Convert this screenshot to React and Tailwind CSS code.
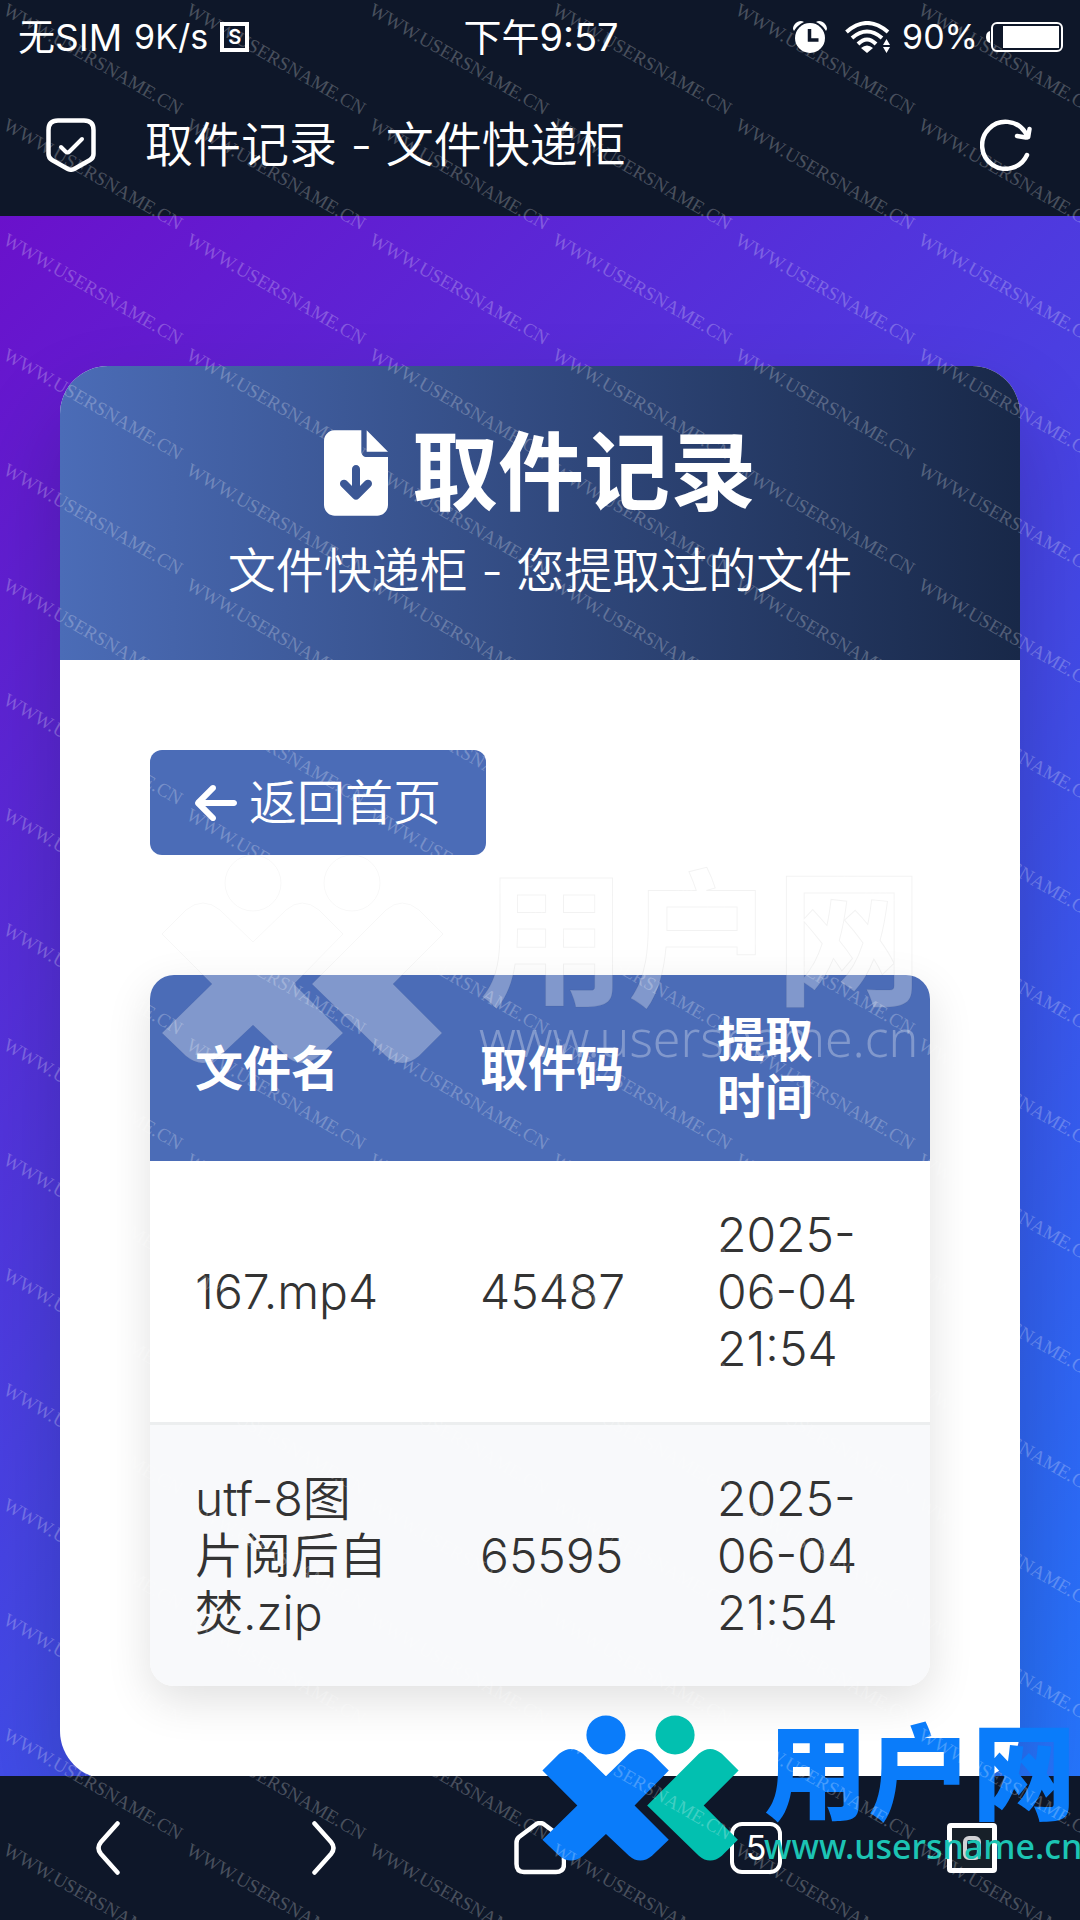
import React from "react";
import { FaArrowLeft, FaFileArrowDown } from "react-icons/fa6";

const records = [
  { name: "167.mp4", code: "45487", time: "2025-\n06-04\n21:54" },
  { name: "utf-8图片阅后自焚.zip", code: "65595", time: "2025-\n06-04\n21:54" },
];

const stamps = Array.from({ length: 17 * 6 }, (_, i) => i);

const StatusBar = () => (
  <div className="grid h-[74px] grid-cols-[1fr_auto_1fr] items-center pl-[18px] pr-4 text-[34px] leading-none">
    <div className="flex items-center gap-3">
      <span className="text-[37px]">无SIM</span>
      <span>9K/s</span>
      <span className="flex h-[30px] w-[29px] items-center justify-center border-4 border-white text-[20px] font-semibold">
        S
      </span>
    </div>
    <span className="text-[38px]">下午9:57</span>
    <div className="flex items-center justify-end gap-3">
      {/* Alarm */}
      <svg className="mr-1.5 h-8 w-[34px]" viewBox="0 0 34 32" fill="white">
        <path d="M0 8C0 3 6 -2 11 1C7 3 4 5 1 10Z" />
        <path d="M34 8C34 3 28 -2 23 1C27 3 30 5 33 10Z" />
        <circle cx="17" cy="17" r="15" />
        <path d="M16.500 8v11h9" fill="none" stroke="#0e1729" strokeWidth="3.500" />
      </svg>
      {/* Wifi */}
      <svg className="h-8 w-[45px]" viewBox="0 0 45 32" fill="none" stroke="white" strokeWidth="4">
        <path d="M1.500 11Q22 -7 43 11" />
        <path d="M7 17Q22 4 37 17" />
        <path d="M13 23Q22 14 31 23" />
        <path d="M16 27Q22 22 28 27L22 32Z" fill="white" stroke="none" />
        <path d="M38 24l3.500-6l3.500 6zM38 26h7l-3.500 6z" fill="white" stroke="none" />
      </svg>
      <span>90%</span>
      {/* Battery */}
      <svg className="-ml-1 h-[30px] w-[78px]" viewBox="0 0 78 30" fill="none">
        <path d="M4 9Q0 10 0 15T4 21Z" fill="white" />
        <rect x="6" y="1" width="70" height="28" rx="5" stroke="white" strokeWidth="2" />
        <rect x="17" y="4" width="56" height="22" fill="white" />
      </svg>
    </div>
  </div>
);

const TitleBar = () => (
  <div className="flex h-[142px] items-center pl-[46px] pr-12">
    <svg className="h-[54px] w-[50px]" viewBox="0 0 50 54" fill="none" stroke="white" strokeLinecap="round" strokeLinejoin="round">
      <path d="M12 2.500H38Q47.500 2.500 47.500 12V36Q47.500 40 44 42L29 50.500Q25 53 21 50.500L6 42Q2.500 40 2.500 36V12Q2.500 2.500 12 2.500Z" strokeWidth="4.500" />
      <path d="M15 29L19.500 33.500Q21.500 35.500 23.500 33.500L36 21" strokeWidth="4" />
    </svg>
    <h2 className="ml-[49px] flex-1 text-[48px] font-[350] leading-none">取件记录 - 文件快递柜</h2>
    <button type="button" aria-label="刷新">
      <svg className="h-[52px] w-[52px]" viewBox="0 0 52 52" fill="none" stroke="white" strokeWidth="4.500" strokeLinecap="round" strokeLinejoin="round">
        <path d="M47 36A23.500 23.500 0 1 1 45 13L48 18" />
        <path d="M37 17L46 18.500Q48 18.500 48.500 16L49.500 10" />
      </svg>
    </button>
  </div>
);

const RecordTable = () => (
  <div className="mt-[120px] overflow-hidden rounded-3xl shadow-[0_15px_45px_rgba(0,0,0,0.12)]">
    <table className="w-full table-fixed text-left text-[48px] leading-[57px] text-[#333]">
      <thead className="bg-[#4b6cb7] text-white">
        <tr>
          <th className="w-[285px] px-[45px] py-9 font-bold">文件名</th>
          <th className="w-[237px] px-[45px] py-9 font-bold whitespace-nowrap">取件码</th>
          <th className="whitespace-pre-line px-[45px] py-9 font-bold">{"提取\n时间"}</th>
        </tr>
      </thead>
      <tbody>
        {records.map((row) => (
          <tr
            key={row.code}
            className="border-b-[3px] border-[#eceeef] bg-white font-[350] last:border-b-0 even:bg-[#f8f9fb]"
          >
            <td className="px-[45px] py-[45px] break-words">{row.name}</td>
            <td className="px-[45px] py-[45px]">{row.code}</td>
            <td className="whitespace-pre-line px-[45px] py-[45px]">{row.time}</td>
          </tr>
        ))}
      </tbody>
    </table>
  </div>
);

const NavBar = () => (
  <nav className="grid h-36 shrink-0 grid-cols-5 items-center justify-items-center bg-[#0e1729]">
    <button type="button" aria-label="后退">
      <svg className="h-[54px] w-6" viewBox="0 0 24 54" fill="none" stroke="white" strokeWidth="4.500" strokeLinecap="round">
        <path d="M21.500 2.500L5 21Q0 27 5 33L21.500 51.500" />
      </svg>
    </button>
    <button type="button" aria-label="前进">
      <svg className="h-[54px] w-6" viewBox="0 0 24 54" fill="none" stroke="white" strokeWidth="4.500" strokeLinecap="round">
        <path d="M2.500 2.500L19 21Q24 27 19 33L2.500 51.500" />
      </svg>
    </button>
    <button type="button" aria-label="主页">
      <svg className="h-[54px] w-[52px]" viewBox="0 0 52 54" fill="none" stroke="white" strokeWidth="4.500">
        <path d="M5 16L21 4Q26 0 31 4L47 16Q50 18.500 50 22V43Q50 51 42 51H10Q2.500 51 2.500 43V22Q2.500 18 5 16Z" />
      </svg>
    </button>
    <button
      type="button"
      aria-label="标签页"
      className="flex h-[52px] w-[52px] items-center justify-center rounded-xl border-4 border-white text-[34px] leading-none"
    >
      5
    </button>
    <button
      type="button"
      aria-label="菜单"
      className="flex h-[50px] w-[50px] items-center justify-center rounded-sm border-[5px] border-white bg-[#172029]"
    >
      <span className="h-6 w-[18px] rounded-md border-4 border-white/80" />
    </button>
  </nav>
);

const BrandMark = ({ className, left, right, outline }) => (
  <svg className={className} viewBox="0 0 285 212" stroke={outline} strokeWidth="1">
    <g fill={left}>
      <circle cx="93" cy="30" r="28" />
      <path d="M2 81L26 57Q43 43 60 57L93 89L126 57Q142 43 159 57L183 81L134 131L183 180L159 203Q142 217 126 203L93 172L60 203Q43 217 26 203L2 180L52 131Z" />
    </g>
    <g fill={right}>
      <circle cx="192" cy="30" r="28" />
      <path d="M152 131L226 57Q242 43 259 57L283 81L233 131L282 180L259 203Q242 217 226 203Z" />
    </g>
  </svg>
);

// Repeated diagonal site name over the whole screen
const Stamps = () => (
  <div className="pointer-events-none absolute inset-0 grid auto-rows-[115px] grid-cols-[repeat(6,183px)] overflow-hidden pl-2.5 font-['Liberation_Serif',serif] text-[19px] leading-[19px] text-white/25">
    {stamps.map((i) => (
      <span key={i} className="h-[19px] origin-top-left rotate-30 whitespace-nowrap">
        WWW.USERSNAME.CN
      </span>
    ))}
  </div>
);

const App = () => {
  return (
    <div className="relative flex h-screen flex-col overflow-hidden bg-[#0e1729] font-[Inter,'Noto_Sans_CJK_SC',sans-serif] text-white">
      <header className="shrink-0">
        <StatusBar />
        <TitleBar />
      </header>

      <main className="min-h-0 flex-1 overflow-hidden bg-[linear-gradient(135deg,#6a11cb_0%,#2575fc_100%)] px-[60px] pt-[150px]">
        <section className="overflow-hidden rounded-[48px] bg-white shadow-[0_45px_90px_rgba(0,0,0,0.2)]">
          <div className="bg-[linear-gradient(to_right,#4b6cb7,#182848)] py-[60px] text-center">
            <h1 className="flex items-center justify-center gap-6 text-[86px] font-bold leading-[94px]">
              <FaFileArrowDown className="h-[86px] w-16" />
              取件记录
            </h1>
            <p className="mt-[22px] text-[48px] font-[350] leading-[58px]">文件快递柜 - 您提取过的文件</p>
          </div>
          <div className="px-[90px] pb-[93px] pt-[90px]">
            <a
              href="#home"
              className="flex h-[105px] w-fit items-center gap-3 rounded-xl bg-[#4b6cb7] px-[45px] text-[48px] font-[350]"
            >
              <FaArrowLeft className="h-12 w-[42px]" />
              返回首页
            </a>
            <RecordTable />
          </div>
        </section>
      </main>

      <NavBar />

      {/* Faded brand across the table head */}
      <div className="pointer-events-none absolute left-40 top-[853px] flex gap-[34px] text-white/30">
        <BrandMark className="h-[212px] w-[285px]" left="rgba(255,255,255,0.3)" right="rgba(255,255,255,0.3)" outline="rgba(0,0,0,0.03)" />
        <div className="pt-4">
          <p className="text-[148px] font-bold leading-[144px] [-webkit-text-stroke:1px_rgba(0,0,0,0.05)]">用户网</p>
          <p className="font-['Noto_Sans'] text-[50px] font-light leading-[50px]">www.usersname.cn</p>
        </div>
      </div>

      {/* Brand over the bottom bar */}
      <div className="pointer-events-none absolute bottom-[54px] right-0 flex gap-6">
        <BrandMark className="h-[148px] w-[199px]" left="#0a7cfa" right="#02c0b0" outline="none" />
        <div className="w-[316px] pt-2">
          <p className="text-[104px] font-black leading-[104px] text-[#0a7cfa]">用户网</p>
          <p className="font-['Noto_Sans'] text-[34px] font-medium leading-[40px] text-[#1cc4b4]">www.usersname.cn</p>
        </div>
      </div>

      <Stamps />
    </div>
  );
};

export default App;
